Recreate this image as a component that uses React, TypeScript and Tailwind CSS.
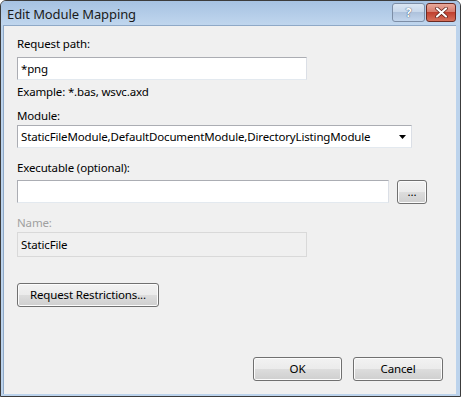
const font = { fontFamily: '"Noto Sans", "Open Sans", sans-serif' };

function WinButton({ label, className }: { label: string; className: string }) {
  return (
    <div
      className={`flex items-center justify-center rounded-[3px] border border-[#707070] bg-[linear-gradient(#f2f2f2_0%,#ebebeb_50%,#dddddd_50%,#cfcfcf_100%)] text-black shadow-[inset_0_0_0_1px_#fcfcfc] ${className}`}
    >
      {label}
    </div>
  );
}

export default function App() {
  return (
    <div
      className="flex h-[397px] w-[461px] flex-col overflow-hidden rounded-t-[6px] border border-[#3c3c3c] bg-[#bcd3ec]"
      style={font}
    >
      {/* title bar */}
      <div className="flex h-[24px] shrink-0 items-start bg-[linear-gradient(#a6c2e2,#c0d6ee)] pl-[6px] pr-[4px]">
        <span className="mt-[5px] text-[13px] leading-[16px] tracking-[-0.1px] text-[#1b1b1b]">Edit Module Mapping</span>
        <div className="ml-auto flex gap-[1px]">
          <div className="mt-[2px] flex h-[19px] w-[33px] items-center justify-center rounded-[3px] border border-[#7d8ea6] bg-[linear-gradient(#dbe6f3_0%,#c5d6ea_50%,#aec2dc_50%,#c2d5ec_100%)] text-[12px] font-bold text-white [text-shadow:0_0_1px_#3f556f,0_0_1px_#3f556f]">
            ?
          </div>
          <div className="mt-[2px] flex h-[19px] w-[30px] items-center justify-center rounded-[3px] border border-[#6b2a22] bg-[linear-gradient(#e9a99b_0%,#d5786a_50%,#c0402f_50%,#d66f5a_100%)]">
            <svg width="13" height="11" viewBox="0 0 13 11">
              <path d="M2 1.5 L11 9.5 M11 1.5 L2 9.5" stroke="#5a1d16" strokeWidth="3.6" strokeLinecap="round" />
              <path d="M2 1.5 L11 9.5 M11 1.5 L2 9.5" stroke="#ffffff" strokeWidth="2.2" strokeLinecap="round" />
            </svg>
          </div>
        </div>
      </div>

      {/* client area */}
      <div className="ml-[2px] mr-[4px] mb-[2px] flex flex-1 flex-col border-l border-t border-[#8fa9c7] bg-[#f0f0f0] pl-[13px] pr-[13px] pt-[10px] text-[11.5px] leading-[16px] tracking-[-0.15px] text-black">
        <div>Request path:</div>
        <div className="mt-[5px] flex h-[23px] w-[290px] items-center border border-[#abadb3] border-b-[#e3e9ef] border-r-[#dbdfe6] bg-white pl-[3px]">
          *png
        </div>
        <div className="mt-[4px]">Example: *.bas, wsvc.axd</div>
        <div className="mt-[8px]">Module:</div>
        <div className="mt-[1px] flex h-[23px] w-[395px] items-center border border-[#abadb3] border-b-[#e3e9ef] border-r-[#dbdfe6] bg-white pl-[3px]">
          <span>StaticFileModule,DefaultDocumentModule,DirectoryListingModule</span>
          <svg className="ml-auto mr-[5px]" width="7" height="4" viewBox="0 0 7 4">
            <path d="M0 0 H7 L3.5 4 Z" fill="#000" />
          </svg>
        </div>
        <div className="mt-[12px]">Executable (optional):</div>
        <div className="mt-[4px] flex items-start">
          <div className="h-[23px] w-[372px] border border-[#abadb3] border-b-[#e3e9ef] border-r-[#dbdfe6] bg-white" />
          <WinButton label="..." className="ml-[8px] h-[24px] w-[30px] leading-[10px]" />
        </div>
        <div className="mt-[11px] text-[#a0a0a0]">Name:</div>
        <div className="mt-[1px] flex h-[25px] w-[290px] items-center border border-[#d9d9d9] bg-[#f0f0f0] pl-[3px]">
          StaticFile
        </div>
        <WinButton label="Request Restrictions..." className="mt-[26px] h-[24px] w-[142px]" />
        <div className="mb-[13px] mt-auto flex justify-end gap-[11px]">
          <WinButton label="OK" className="h-[24px] w-[89px]" />
          <WinButton label="Cancel" className="h-[24px] w-[90px]" />
        </div>
      </div>
    </div>
  );
}
